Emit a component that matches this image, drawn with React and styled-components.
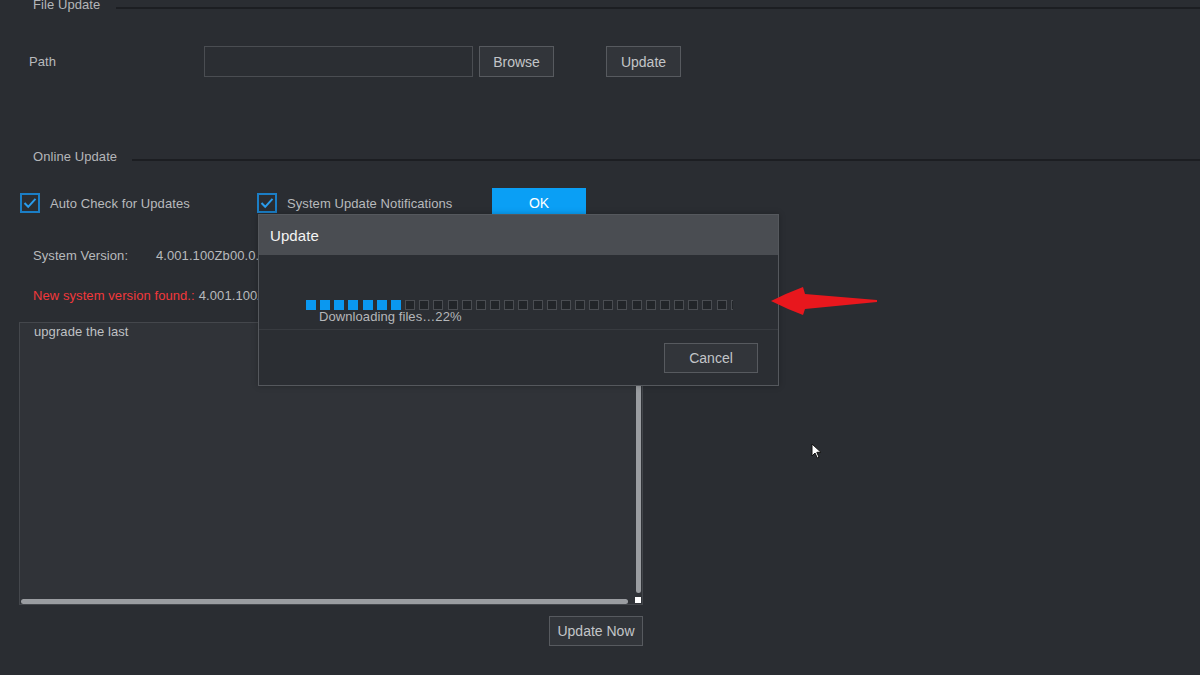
import React from 'react'
import styled, { createGlobalStyle } from 'styled-components'

const GlobalStyle = createGlobalStyle`
  html, body {
    margin: 0;
    padding: 0;
    background: #2a2d32;
  }
  * {
    box-sizing: border-box;
  }
`

const Page = styled.div`
  position: relative;
  width: 1200px;
  height: 675px;
  overflow: hidden;
  background: #2a2d32;
  font-family: "Liberation Sans", Arial, sans-serif;
  font-size: 13px;
  letter-spacing: 0.08px;
  color: #b8babd;
`

const SectionHead = styled.div`
  display: flex;
  align-items: center;
  height: 16px;
  padding-left: 33px;
  gap: ${({ $gap }) => $gap}px;
  margin-top: ${({ $top }) => $top}px;
`

const SectionTitle = styled.span`
  line-height: 16px;
  color: #b4b6b9;
`

const Rule = styled.div`
  flex: 1;
  height: 2px;
  margin-top: 6px;
  background: #1c1e22;
`

const PathRow = styled.div`
  display: flex;
  align-items: center;
  margin-top: 33px;
  height: 31px;
`

const FieldLabel = styled.span`
  width: 204px;
  padding-left: 29px;
`

const TextInput = styled.div`
  width: 269px;
  height: 31px;
  border: 1px solid #4a4d52;
  background: #2b2e33;
`

const Button = styled.button`
  width: ${({ $w }) => $w || 75}px;
  height: ${({ $h }) => $h || 31}px;
  margin-left: ${({ $ml }) => $ml || 0}px;
  margin-top: ${({ $mt }) => $mt || 0}px;
  padding: 0;
  border: 1px solid #575a5f;
  background: #32353a;
  color: #c3c5c8;
  font-family: "Liberation Sans", Arial, sans-serif;
  font-size: 14px;
`

const PrimaryButton = styled.button`
  width: 94px;
  height: 30px;
  padding: 0;
  border: none;
  background: #0a9ff5;
  color: #ffffff;
  font-family: "Liberation Sans", Arial, sans-serif;
  font-size: 14px;
`

const CheckRow = styled.div`
  display: flex;
  align-items: center;
  height: 30px;
  margin-top: 23px;
  padding-left: 20px;
`

const CheckItem = styled.label`
  display: flex;
  align-items: center;
  width: ${({ $w }) => $w}px;
  gap: 10px;
`

const Box = styled.span`
  display: flex;
  align-items: center;
  justify-content: center;
  width: 20px;
  height: 20px;
  border: 2px solid #1b7ec6;
`

const InfoRow = styled.div`
  display: flex;
  align-items: center;
  height: 20px;
  margin-top: ${({ $top }) => $top}px;
  padding-left: 33px;
`

const InfoLabel = styled.span`
  width: 123px;
`

const Alert = styled.span`
  color: #f2383b;
  margin-right: 4px;
`

const Column = styled.div`
  width: 624px;
  margin-left: 19px;
  display: flex;
  flex-direction: column;
  align-items: flex-end;
`

const NotesBox = styled.div`
  position: relative;
  width: 624px;
  height: 283px;
  margin-top: 17px;
  padding: 1px 14px;
  border: 1px solid #44474c;
  background: #303338;
  line-height: 16px;
  color: #bfc1c4;
`

const VScroll = styled.div`
  position: absolute;
  right: 1px;
  top: 2px;
  bottom: 11px;
  width: 5px;
  border-radius: 3px;
  background: #9a9da1;
`

const HScroll = styled.div`
  position: absolute;
  left: 1px;
  right: 14px;
  bottom: 0;
  height: 5px;
  border-radius: 3px;
  background: #9a9da1;
`

const Corner = styled.div`
  position: absolute;
  right: 1px;
  bottom: 1px;
  width: 6px;
  height: 6px;
  background: #ffffff;
`

const Dialog = styled.div`
  position: absolute;
  left: 258px;
  top: 214px;
  width: 521px;
  height: 172px;
  border: 1px solid #55585d;
  background: #2b2e33;
  display: flex;
  flex-direction: column;
  box-shadow: 0 0 6px rgba(0, 0, 0, 0.25);
`

const DialogHead = styled.div`
  height: 40px;
  display: flex;
  align-items: center;
  padding-left: 11px;
  background: #4a4d52;
  color: #f4f4f4;
  font-size: 15px;
`

const DialogBody = styled.div`
  height: 75px;
  padding: 45px 0 0 47px;
  border-bottom: 1px solid #383b40;
`

const Segments = styled.div`
  display: flex;
  gap: 4.17px;
  width: 427px;
  overflow: hidden;
`

const Segment = styled.span`
  flex: none;
  width: 10px;
  height: 10px;
  background: ${({ $on }) => ($on ? '#0a98f0' : '#222529')};
  border: 1px solid ${({ $on }) => ($on ? '#0a98f0' : '#4a4d52')};
`

const ProgressText = styled.div`
  margin-left: 13px;
  line-height: 14px;
  color: #b5b7ba;
`

const DialogFoot = styled.div`
  flex: 1;
  display: flex;
  justify-content: flex-end;
  align-items: flex-start;
  padding: 13px 20px 0 0;
`

const Pointer = styled.svg`
  position: absolute;
  left: 768px;
  top: 284px;
`

const Cursor = styled.svg`
  position: absolute;
  left: 811px;
  top: 443px;
`

const segments = Array.from({ length: 31 }, (_, i) => i < 7)

function Check({ label, width }) {
  return (
    <CheckItem $w={width}>
      <Box>
        <svg width="14" height="12" viewBox="0 0 14 12">
          <polyline points="1.5,6 5.2,9.8 12.5,1.8" fill="none" stroke="#2a9cec" strokeWidth="2" />
        </svg>
      </Box>
      <span>{label}</span>
    </CheckItem>
  )
}

export default function App() {
  return (
    <Page>
      <GlobalStyle />

      <SectionHead $top={-3} $gap={16}>
        <SectionTitle>File Update</SectionTitle>
        <Rule />
      </SectionHead>

      <PathRow>
        <FieldLabel>Path</FieldLabel>
        <TextInput />
        <Button $ml={6}>Browse</Button>
        <Button $ml={52}>Update</Button>
      </PathRow>

      <SectionHead $top={72} $gap={15}>
        <SectionTitle>Online Update</SectionTitle>
        <Rule />
      </SectionHead>

      <CheckRow>
        <Check label="Auto Check for Updates" width={237} />
        <Check label="System Update Notifications" width={235} />
        <PrimaryButton>OK</PrimaryButton>
      </CheckRow>

      <InfoRow $top={27}>
        <InfoLabel>System Version:</InfoLabel>
        <span>4.001.100Zb00.0.R, Build Date: 2021-05-20</span>
      </InfoRow>

      <InfoRow $top={20}>
        <Alert>New system version found.:</Alert>
        <span>4.001.100Zb00.1.R</span>
      </InfoRow>

      <Column>
        <NotesBox>
          upgrade the last
          <VScroll />
          <HScroll />
          <Corner />
        </NotesBox>
        <Button $w={94} $h={30} $mt={11}>Update Now</Button>
      </Column>

      <Dialog>
        <DialogHead>Update</DialogHead>
        <DialogBody>
          <Segments>
            {segments.map((on, i) => (
              <Segment key={i} $on={on} />
            ))}
          </Segments>
          <ProgressText>Downloading files…22%</ProgressText>
        </DialogBody>
        <DialogFoot>
          <Button $w={94} $h={30}>Cancel</Button>
        </DialogFoot>
      </Dialog>

      {/* red callout arrow next to the progress bar */}
      <Pointer width="112" height="36" viewBox="0 0 112 36">
        <path
          d="M3 17 Q19 9 35 3 L37 10 L109 16 L109 18 L37 25 L35 31 Q19 25 3 17 Z"
          fill="#e8171d"
        />
      </Pointer>

      <Cursor width="12" height="17" viewBox="0 0 12 17">
        <path d="M1 1 L1 13 L4 10 L6.3 15 L8 14.2 L5.8 9.3 L10 9.3 Z" fill="#ffffff" stroke="#111" strokeWidth="1" />
      </Cursor>
    </Page>
  )
}
